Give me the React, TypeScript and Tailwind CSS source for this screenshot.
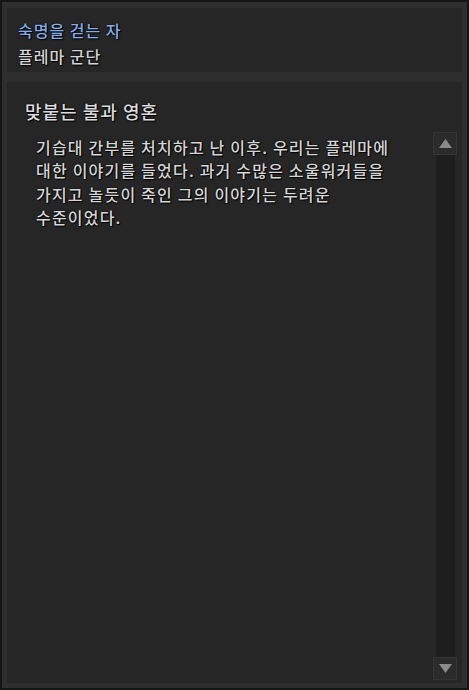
import React from "react";

const lines = [
  "기습대 간부를 처치하고 난 이후. 우리는 플레마에",
  "대한 이야기를 들었다. 과거 수많은 소울워커들을",
  "가지고 놀듯이 죽인 그의 이야기는 두려운",
  "수준이었다.",
];

const shadow = "[text-shadow:0_0_2px_#000,1px_1px_1px_#000]";

export default function App() {
  return (
    <div
      className="w-[469px] h-[690px] bg-[#2e2e2e] border-2 border-[#151515] pt-[6px] px-[5px] pb-[5px] flex flex-col gap-[10px]"
      style={{ fontFamily: '"Noto Sans CJK KR", "Noto Sans", sans-serif' }}
    >
      {/* header */}
      <div className="h-[64px] shrink-0 bg-[#262626] pl-[11px] pt-[10px] flex flex-col">
        <div className={`text-[16px] leading-[25px] font-medium text-[#86aee6] tracking-[1px] ${shadow}`}>숙명을 걷는 자</div>
        <div className={`text-[16px] leading-[26px] font-medium text-[#d4d4d4] tracking-[1px] ${shadow}`}>플레마 군단</div>
      </div>

      {/* body */}
      <div className="flex-1 bg-[#262626] flex flex-col pt-[17px] pr-[5px] pb-[3px]">
        <div className={`pl-[18px] text-[18px] leading-[24px] font-medium text-[#dcdcdc] tracking-[1px] ${shadow}`}>맞붙는 불과 영혼</div>
        <div className="flex-1 flex mt-[9px]">
          <div className="flex-1 pl-[29px] pt-[4px]">
            {lines.map((l, i) => (
              <div key={i} className={`whitespace-nowrap text-[16px] leading-[23.3px] font-medium text-[#d6d6d6] tracking-[1.2px] ${shadow}`}>
                {l}
              </div>
            ))}
          </div>
          {/* scrollbar */}
          <div className="w-[24px] flex flex-col items-center">
            <div className="w-[24px] h-[23px] bg-[#2b2b2b] border border-[#353535] flex items-center justify-center">
              <svg width="13" height="9" viewBox="0 0 13 9">
                <polygon points="6.5,0 13,9 0,9" fill="#8a8a8a" />
              </svg>
            </div>
            <div className="flex-1 w-[19px] bg-[#1e1e1e]" />
            <div className="w-[24px] h-[23px] bg-[#2b2b2b] border border-[#353535] flex items-center justify-center">
              <svg width="13" height="9" viewBox="0 0 13 9">
                <polygon points="0,0 13,0 6.5,9" fill="#8a8a8a" />
              </svg>
            </div>
          </div>
        </div>
      </div>
    </div>
  );
}
